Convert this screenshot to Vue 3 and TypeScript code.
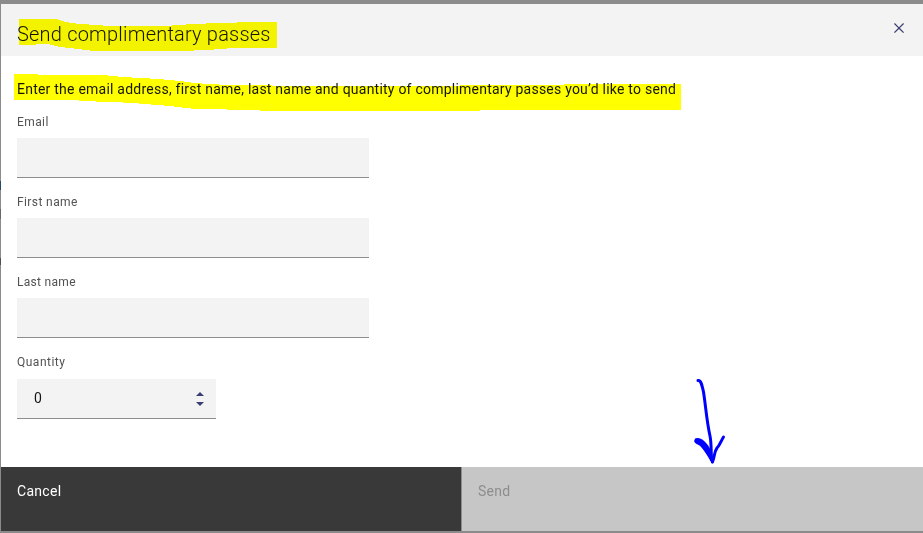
<script setup lang="ts">
import { reactive, ref } from 'vue'

interface TextField {
  id: 'email' | 'firstName' | 'lastName'
  label: string
}

const fields: TextField[] = [
  { id: 'email', label: 'Email' },
  { id: 'firstName', label: 'First name' },
  { id: 'lastName', label: 'Last name' },
]

const form = reactive({ email: '', firstName: '', lastName: '' })
const quantity = ref(0)

function step(delta: number) {
  quantity.value = Math.max(0, quantity.value + delta)
}
</script>

<template>
  <div class="backdrop">
    <section class="modal">
      <header class="header">
        <h1 class="title">Send complimentary passes</h1>
        <button class="close" type="button">
          <svg width="20" height="20" viewBox="0 0 32 32">
            <path d="M24 9.4 22.6 8 16 14.6 9.4 8 8 9.4 14.6 16 8 22.6 9.4 24 16 17.4 22.6 24 24 22.6 17.4 16z" />
          </svg>
        </button>
      </header>

      <div class="body">
        <p class="intro">Enter the email address, first name, last name and quantity of complimentary passes you’d like to send</p>
        <div v-for="field in fields" :key="field.id" class="field">
          <label class="label" :class="field.id" :for="field.id">{{ field.label }}</label>
          <input :id="field.id" v-model="form[field.id]" class="input" type="text" />
        </div>
        <div class="field">
          <span class="label quantity">Quantity</span>
          <div class="number">
            <span class="value">{{ quantity }}</span>
            <div class="steppers">
              <button type="button" @click="step(1)">
                <svg width="8" height="4" viewBox="0 0 8 4"><path d="M0 4 4 0l4 4z" /></svg>
              </button>
              <button type="button" @click="step(-1)">
                <svg width="8" height="4" viewBox="0 0 8 4"><path d="M0 0l4 4 4-4z" /></svg>
              </button>
            </div>
          </div>
        </div>
      </div>

      <footer class="footer">
        <button class="action cancel" type="button"><span>Cancel</span></button>
        <button class="action send" type="button" disabled><span>Send</span></button>
      </footer>
    </section>

    <svg class="marker" width="923" height="533" viewBox="0 0 923 533" shape-rendering="crispEdges">
      <path d="M19 19H57L62 21 69 22.5 80 24 97 25 108 26H165L193 24 219 23 254 22H277V48H234L207 50 180 51H94L78 49 60 47 50 44.5 36 44 35 45H19z" />
      <path d="M14 74H38V75H103L123 77 140 78 159 79 180 81 195 83 208 84 230 85 265 85 279 86H460V85H564V84H681V110H480V111H260L259 110 195 109 170 106 133 103 113 102 79 101V100H14z" />
    </svg>
    <svg class="pen" width="923" height="533" viewBox="0 0 923 533">
      <path d="M698 380.5C701 380 702 385 703.5 392C705.5 404 706.5 420 710 436C711.5 443 711 452 711.5 460" />
      <path d="M723.5 437C721 441 720 445 717 448C714 452 715 456 712.5 462" />
      <path class="fill" d="M696 439.5C700 438 704 442 707 446C709 449 711 452 712.5 462C709 456 706 450 701 445C698 443 694 442 696 439.5z" />
    </svg>
    <i class="peek link"></i>
    <i class="peek copy"></i>
    <i class="peek line"></i>
  </div>
</template>

<style>
body {
  margin: 0;
  overflow: hidden;
}
</style>

<style scoped>
.backdrop {
  position: relative;
  box-sizing: border-box;
  width: 923px;
  height: 533px;
  padding: 4px 0 2px 1px;
  background: #8b8b8b;
  font-family: Roboto, 'Liberation Sans', sans-serif;
  color: #161616;
}
.modal {
  display: flex;
  flex-direction: column;
  height: 527px;
  background: #fff;
}
.header {
  display: flex;
  justify-content: space-between;
  flex: none;
  height: 52px;
  background: #f3f3f3;
}
.title {
  margin: 16px 0 0 16px;
  font-size: 20px;
  line-height: 28px;
  font-weight: 300;
  letter-spacing: 0.2px;
  white-space: nowrap;
}
button {
  border: 0;
  padding: 0;
  background: none;
  font: inherit;
}
.close {
  display: flex;
  align-items: center;
  justify-content: center;
  width: 48px;
  height: 48px;
}
svg path {
  fill: #393e70;
}
.body {
  flex: 1;
  padding: 0 16px;
}
.intro {
  margin: 23px 0 14px;
  font-size: 14px;
  line-height: 20px;
  letter-spacing: 0.23px;
  white-space: nowrap;
}
.field {
  display: flex;
  flex-direction: column;
  align-items: flex-start;
  height: 80px;
}
.label {
  height: 16px;
  margin: 1px 0 8px;
  font-size: 12px;
  line-height: 16px;
  letter-spacing: 0.4px;
  color: #525252;
}
.lastName {
  letter-spacing: 0.3px;
}
.quantity {
  letter-spacing: 0.5px;
}
.input,
.number {
  box-sizing: border-box;
  height: 40px;
  border: 0;
  border-bottom: 1px solid #8d8d8d;
  border-radius: 0;
  background: #f3f3f3;
  outline: none;
}
.input {
  width: 352px;
  padding: 0 16px;
  font: inherit;
}
.number {
  display: flex;
  align-items: center;
  justify-content: space-between;
  width: 199px;
  padding: 0 12px 0 16px;
  margin-top: 1px;
  font-size: 14px;
}
.value {
  padding: 0 0 2px 1px;
}
.steppers {
  display: flex;
  flex-direction: column;
  gap: 6px;
}
.steppers button,
.steppers svg {
  display: block;
  height: 4px;
}
.footer {
  display: flex;
  flex: none;
  height: 64px;
}
.action {
  display: flex;
  flex: 1;
  align-items: flex-start;
  padding: 15px 16px;
  font-size: 14px;
  line-height: 18px;
  letter-spacing: 0.3px;
}
.cancel {
  flex: 0 0 460px;
  background: #393939;
  color: #fff;
}
.send {
  border-left: 1px solid #8d8d8d;
  background: #c6c6c6;
  color: #8d8d8d;
}
.marker,
.pen {
  position: absolute;
  top: 0;
  left: 0;
  pointer-events: none;
}
.marker {
  mix-blend-mode: multiply;
}
.marker path {
  fill: #ff0;
}
.pen path {
  fill: none;
  stroke: #00f;
  stroke-width: 3;
  stroke-linecap: round;
  stroke-linejoin: round;
}
.pen .fill {
  fill: #00f;
  stroke-width: 2.5;
}
.peek {
  position: absolute;
  left: 0;
  width: 1px;
}
.link {
  top: 181px;
  height: 9px;
  background: #254967;
}
.copy {
  top: 209px;
  height: 10px;
  background: #686868;
}
.line {
  top: 258px;
  height: 7px;
  background: #4b5054;
}
</style>
